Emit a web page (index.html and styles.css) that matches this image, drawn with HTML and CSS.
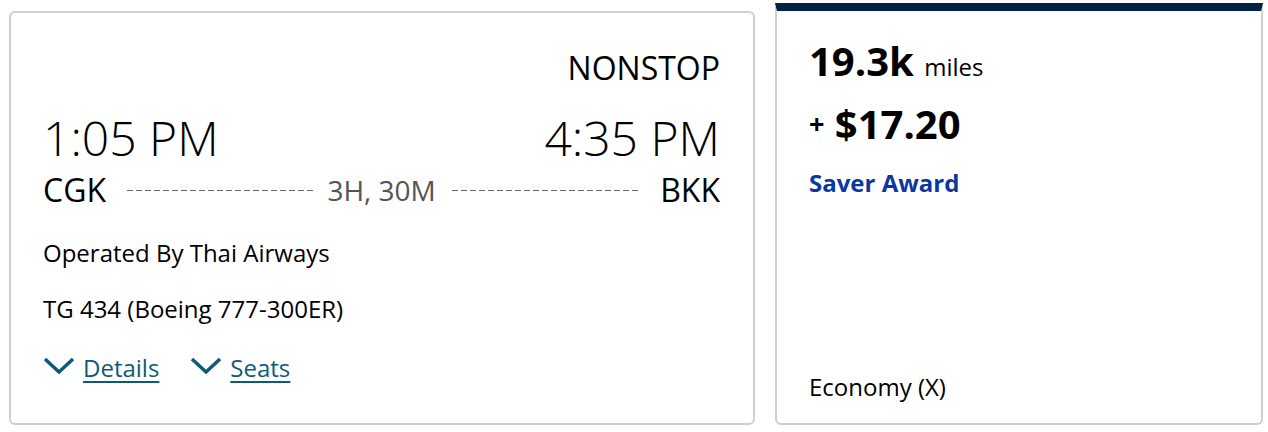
FILE: index.html
```html
<!DOCTYPE html>
<html>
<head>
  <meta charset="UTF-8" />
  <title>Flight result</title>
  <link rel="stylesheet" href="styles.css">
</head>

<body>
  <div class="result-row">
    <div class="flight-card">
      <div class="stops">NONSTOP</div>

      <div class="times">
        <span>1:05 PM</span>
        <span>4:35 PM</span>
      </div>

      <div class="airports">
        <span class="code">CGK</span>
        <span class="dash dash-left"></span>
        <span class="duration">3H, 30M</span>
        <span class="dash dash-right"></span>
        <span class="code">BKK</span>
      </div>

      <div class="info">Operated By Thai Airways</div>
      <div class="info">TG 434 (Boeing 777-300ER)</div>

      <div class="links">
        <a href="#" class="toggle">
          <svg class="chevron" viewBox="0 0 32 17" width="32" height="17">
            <polyline points="2,2 16,15 30,2" />
          </svg>
          <span>Details</span>
        </a>
        <a href="#" class="toggle">
          <svg class="chevron" viewBox="0 0 32 17" width="32" height="17">
            <polyline points="2,2 16,15 30,2" />
          </svg>
          <span>Seats</span>
        </a>
      </div>
    </div>

    <div class="fare-card">
      <div class="miles"><b>19.3k</b> <span class="unit">miles</span></div>
      <div class="cash"><span class="plus">+</span> $17.20</div>
      <div class="award">Saver Award</div>
      <div class="cabin">Economy (X)</div>
    </div>
  </div>
</body>
</html>
```

FILE: styles.css
```css
html, body {
  margin: 0;
  background: #fff;
  font-family: "Open Sans", "Liberation Sans", sans-serif;
  color: #000;
}

.result-row {
  display: flex;
  align-items: flex-end;
  gap: 20px;
  padding: 3px 0 0 9px;
}

.flight-card {
  box-sizing: border-box;
  width: 746px;
  height: 414px;
  border: 2px solid #cfcfcf;
  border-radius: 6px;
  padding: 35px 33px 0 32px;
}

.stops {
  text-align: right;
  font-size: 32px;
  line-height: 40px;
}

.times {
  display: flex;
  justify-content: space-between;
  margin-top: 22px;
  font-size: 48px;
  font-weight: 300;
  line-height: 56px;
}

.airports {
  display: flex;
  align-items: center;
  margin-top: 4px;
  font-size: 32px;
  line-height: 40px;
}

.dash {
  flex: 1;
  height: 1px;
  background: repeating-linear-gradient(to right, #666 0 6px, transparent 6px 9px);
}

.dash-left {
  margin: 0 14px 0 21px;
}

.dash-right {
  margin: 0 22px 0 16px;
}

.duration {
  font-size: 28px;
  color: #555;
}

.info {
  font-size: 24px;
  line-height: 32px;
  margin-top: 27px;
}

.info + .info {
  margin-top: 24px;
}

.links {
  display: flex;
  gap: 31px;
  margin-top: 27px;
  font-size: 24px;
  line-height: 32px;
}

.toggle {
  display: flex;
  align-items: center;
  gap: 8px;
  color: #0d5b78;
  text-decoration: none;
}

.toggle span {
  text-decoration: underline;
  text-decoration-thickness: 2px;
  text-underline-offset: 4px;
}

.chevron {
  margin-top: -6px;
}

.chevron polyline {
  fill: none;
  stroke: #0d5b78;
  stroke-width: 3.5;
}

.fare-card {
  box-sizing: border-box;
  width: 488px;
  height: 422px;
  border: 2px solid #cfcfcf;
  border-top: 8px solid #022245;
  border-radius: 0 0 6px 6px;
  padding: 26px 32px 20px 32px;
  display: flex;
  flex-direction: column;
}

.miles {
  font-size: 40px;
  line-height: 48px;
}

.miles .unit {
  font-size: 24px;
  line-height: 1;
}

.cash {
  margin-top: 15px;
  font-size: 40px;
  line-height: 48px;
  font-weight: 700;
}

.cash .plus {
  font-size: 27px;
  line-height: 1;
  vertical-align: 5px;
}

.award {
  margin-top: 19px;
  font-size: 24px;
  line-height: 32px;
  font-weight: 700;
  color: #0b37a0;
}

.cabin {
  margin-top: auto;
  font-size: 24px;
  line-height: 32px;
}
```
